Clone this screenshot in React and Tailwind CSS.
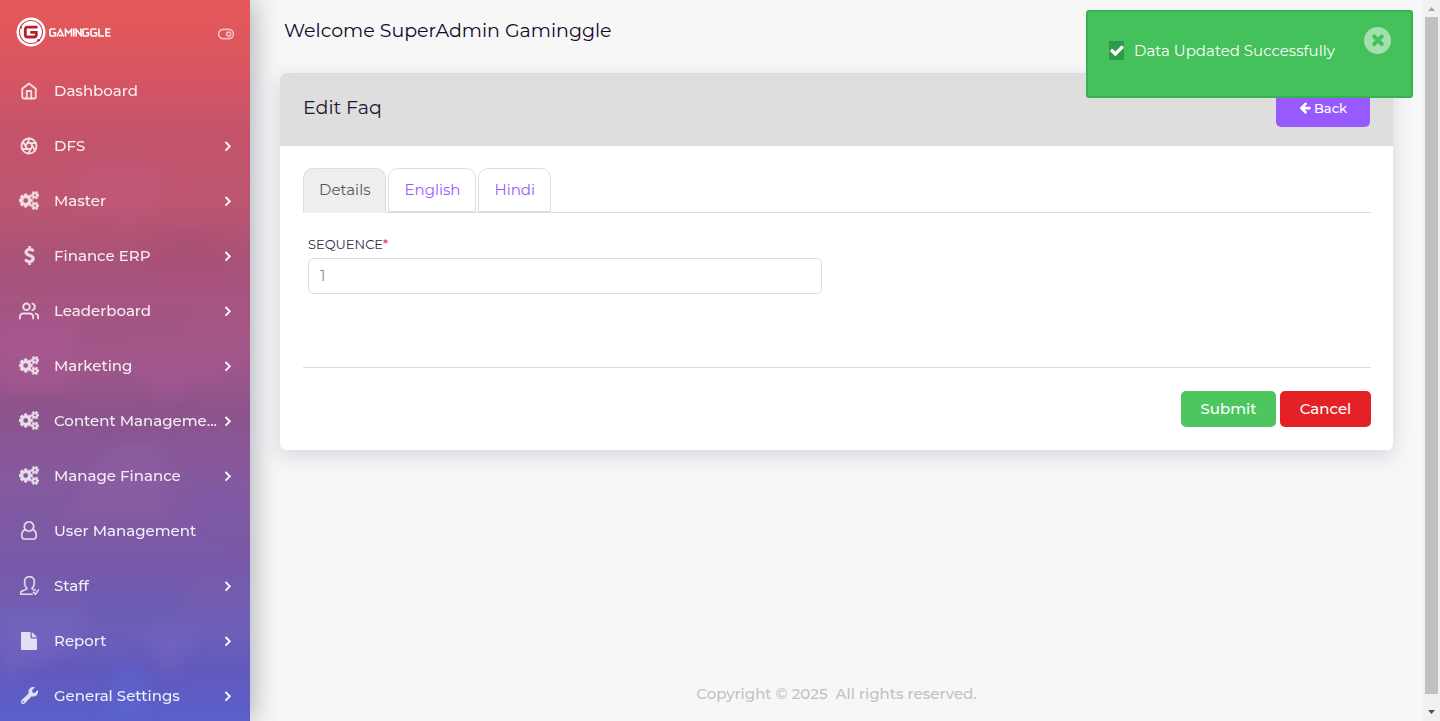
import { FiHome, FiAperture, FiUsers, FiToggleRight } from "react-icons/fi";
import { FaWrench } from "react-icons/fa";
import { SlUserFollowing } from "react-icons/sl";

function Glyph({ viewBox, d, className }) {
  return (
    <svg viewBox={viewBox} fill="currentColor" className={className} aria-hidden="true">
      <path d={d} />
    </svg>
  );
}

const smallGear =
  "v140q0 16-149 31-12 27-30 52 51 113 51 138 0 4-4 7-122 71-124 71-8 0-46-47t-52-68q-20 2-30 2t-30-2q-14 21-52 68t-46 47q-2 0-124-71-4-3-4-7 0-25 51-138-18-25-30-52-149-15-149-31v-140q0-16 149-31 13-29 30-52-51-113-51-138 0-4 4-7 4-2 35-20t59-34 30-16q8 0 46 46.5t52 67.5q20-2 30-2t30 2q51-71 92-112l6-2q4 0 124 70 4 3 4 7 0 25-51 138 17 23 30 52 149 15 149 31z";

const gears =
  "M896 896q0-106-75-181t-181-75-181 75-75 181 75 181 181 75 181-75 75-181zm768 512q0-52-38-90t-90-38-90 38-38 90q0 53 37.5 90.5t90.5 37.5 90.5-37.5 37.5-90.5zm0-1024q0-52-38-90t-90-38-90 38-38 90q0 53 37.5 90.5t90.5 37.5 90.5-37.5 37.5-90.5zm-384 421v185q0 10-7 19.5t-16 10.5l-155 24q-11 35-32 76 34 48 90 115 7 11 7 20 0 12-7 19-23 30-82.5 89.5t-78.5 59.5q-11 0-21-7l-115-90q-37 19-77 31-11 108-23 155-7 24-30 24h-186q-11 0-20-7.5t-10-17.5l-23-153q-34-10-75-31l-118 89q-7 7-20 7-11 0-21-8-144-133-144-160 0-9 7-19 10-14 41-53t47-61q-23-44-35-82l-152-24q-10-1-17-9.5t-7-19.5v-185q0-10 7-19.5t16-10.5l155-24q11-35 32-76-34-48-90-115-7-11-7-20 0-12 7-20 22-30 82-89t79-59q11 0 21 7l115 90q34-18 77-32 11-108 23-154 7-24 30-24h186q11 0 20 7.5t10 17.5l23 153q34 10 75 31l118-89q8-7 20-7 11 0 21 8 144 133 144 160 0 8-7 19-12 16-42 54t-45 60q23 48 34 82l152 23q10 2 17 10.5t7 19.5z" +
  "M1920 1338" + smallGear + "M1920 314" + smallGear;

const Gears = ({ className }) => <Glyph viewBox="0 0 1920 1792" className={className} d={gears} />;

const Dollar = ({ className }) => (
  <Glyph
    viewBox="0 0 1024 1792"
    className={className}
    d="M978 1185q0 153-99.5 263.5t-258.5 136.5v175q0 14-9 23t-23 9h-135q-13 0-22.5-9.5t-9.5-22.5v-175q-66-9-127.5-31t-101.5-44.5-74-48-46.5-37.5-17.5-18q-17-21-2-41l103-135q7-10 23-12 15-2 24 9l2 2q113 99 243 125 37 8 74 8 81 0 142.5-43t61.5-122q0-28-15-53t-33.5-42-58.5-37.5-66-32-80-32.5q-39-16-61.5-25t-61.5-26.5-62.5-31-56.5-35.5-53.5-42.5-43.5-49-35.5-58-21-66.5-8.5-78q0-138 98-242t255-134v-180q0-13 9.5-22.5t22.5-9.5h135q14 0 23 9t9 23v176q57 6 110.5 23t87 33.5 63.5 37.5 39 29 15 14q17 18 5 38l-81 146q-8 15-23 16-14 3-27-7-3-3-14.5-12t-39-26.5-58.5-32-74.5-26-85.5-11.5q-95 0-155 43t-60 111q0 26 8.5 48t29.5 41.5 39.5 33 56 31 60.500 27 70 27.5q53 20 81 31.5t76 35 75.5 42.5 62 50 53 63.5 31.5 76.5 13 94z"
  />
);

const UserOutline = ({ className }) => (
  <Glyph
    viewBox="0 0 1536 1792"
    className={className}
    d="M1201 784q47 14 89.500 38t89 73 79.500 115.500 55 172 22 236.500q0 154-100 263.500t-241 109.500h-854q-141 0-241-109.500t-100-263.500q0-131 22-236.500t55-172 79.500-115.500 89-73 89.500-38q-79-125-79-272 0-104 40.500-198.500t109.500-163.500 163.500-109.500 198.500-40.500 198.500 40.500 163.500 109.500 109.500 163.500 40.500 198.500q0 147-79 272zm-433-656q-159 0-271.500 112.500t-112.500 271.500 112.500 271.500 271.500 112.500 271.500-112.500 112.500-271.500-112.500-271.500-271.500-112.500zm427 1536q88 0 150.500-71.500t62.500-173.500q0-239-78.500-377t-225.500-145q-145 127-336 127t-336-127q-147 7-225.500 145t-78.500 377q0 102 62.500 173.500t150.500 71.500h854z"
  />
);

const FileSolid = ({ className }) => (
  <Glyph
    viewBox="0 0 16 18"
    className={className}
    d="M0 1Q0 0 1 0H9.500V5.500Q9.500 6.500 10.500 6.500H16V17Q16 18 15 18H1Q0 18 0 17ZM10.800 0.200Q11.200 0.300 11.500 0.600L15.400 4.500Q15.700 4.800 15.800 5.200H10.800Z"
  />
);

const ArrowLeft = ({ className }) => (
  <Glyph
    viewBox="0 128 1536 1792"
    className={className}
    d="M1536 896v128q0 53-32.5 90.5t-84.5 37.5h-704l293 294q38 36 38 90t-38 90l-75 76q-37 37-90 37-52 0-91-37l-651-652q-37-37-37-90 0-52 37-91l651-650q38-38 91-38 52 0 90 38l75 74q38 38 38 91t-38 91l-293 293h704q52 0 84.5 37.5t32.5 90.5z"
  />
);

const Check = ({ className }) => (
  <Glyph
    viewBox="100 200 1600 1500"
    className={className}
    d="M1671 566q0 40-28 68l-724 724-136 136q-28 28-68 28t-68-28l-136-136-362-362q-28-28-28-68t28-68l136-136q28-28 68-28t68 28l294 295 656-657q28-28 68-28t68 28l136 136q28 28 28 68z"
  />
);

const Cross = ({ className }) => (
  <Glyph
    viewBox="300 332 1192 1392"
    className={className}
    d="M1490 1322q0 40-28 68l-136 136q-28 28-68 28t-68-28l-294-294-294 294q-28 28-68 28t-68-28l-136-136q-28-28-28-68t28-68l294-294-294-294q-28-28-28-68t28-68l136-136q28-28 68-28t68 28l294 294 294-294q28-28 68-28t68 28l136 136q28 28 28 68t-28 68l-294 294 294 294q28 28 28 68z"
  />
);

function Chevron() {
  return (
    <svg viewBox="0 0 8 12" className="mb-px h-3 w-2 shrink-0" fill="none" stroke="currentColor" strokeWidth="1.800" aria-hidden="true">
      <path d="M1.500 2 5.800 6.300 1.500 10.600" />
    </svg>
  );
}

const items = [
  { label: "Dashboard", Icon: FiHome, size: "size-[18px] stroke-[2.5]", leaf: true },
  { label: "DFS", Icon: FiAperture, size: "size-[18px] stroke-[2.5]" },
  { label: "Master", Icon: Gears, size: "h-[19px] w-5 stroke-current stroke-[70]" },
  { label: "Finance ERP", Icon: Dollar, size: "h-[19px] w-[11px] stroke-current stroke-[60]" },
  { label: "Leaderboard", Icon: FiUsers, size: "size-5 stroke-[2.3]" },
  { label: "Marketing", Icon: Gears, size: "h-[19px] w-5 stroke-current stroke-[70]" },
  { label: "Content Manageme...", Icon: Gears, size: "h-[19px] w-5 stroke-current stroke-[70]" },
  { label: "Manage Finance", Icon: Gears, size: "h-[19px] w-5 stroke-current stroke-[70]" },
  { label: "User Management", Icon: UserOutline, size: "h-[19px] w-4 stroke-current stroke-[40]", leaf: true },
  { label: "Staff", Icon: SlUserFollowing, size: "size-[19px] stroke-current stroke-[26]" },
  { label: "Report", Icon: FileSolid, size: "h-[18px] w-4" },
  { label: "General Settings", Icon: FaWrench, size: "size-[17px]" },
];

function Logo() {
  return (
    <a href="#home" className="flex items-center gap-[3px] text-white" aria-label="Gaminggle">
      <svg viewBox="0 0 30 30" className="size-[30px]" aria-hidden="true">
        <circle cx="15" cy="15" r="14.500" fill="#fff" />
        <circle cx="15" cy="15" r="11.500" fill="none" stroke="#cf4a55" strokeWidth="1.200" />
        <circle cx="22.500" cy="23.200" r="1.300" fill="#b3202c" />
        <circle cx="5" cy="10.500" r="1.100" fill="#b3202c" />
        <path d="M21.500 10.200H11.500Q9.300 10.200 9.300 12.400V17.800Q9.300 20 11.500 20H18.300Q20.300 20 20.300 18V15.300H14.300" fill="none" stroke="#b3202c" strokeWidth="2.800" />
      </svg>
      <svg viewBox="0 0 62 9" className="h-[9px] w-[62px]" fill="none" stroke="#fff" strokeWidth="1.600" aria-hidden="true">
        <path d="M6.500 1H2Q1 1 1 2V7Q1 8 2 8H5.500Q6.500 8 6.500 7V4.800H4" />
        <path d="M8 8.500 11.300 1.500 14.600 8.500M10 7.500H13" />
        <path d="M16.500 8.500V1.500L19.500 5 22.500 1.500V8.500M24.800.5V8.500M27.200 8.500V1.500L32 7.500V.5" />
        <path d="M39.500 1H35Q34 1 34 2V7Q34 8 35 8H38.500Q39.500 8 39.500 7V4.800H37" />
        <path d="M47.500 1H43Q42 1 42 2V7Q42 8 43 8H46.500Q47.500 8 47.500 7V4.800H45" />
        <path d="M50 .5V8H55M61.500 1H57V8H61.500M57 4.500H61" />
      </svg>
    </a>
  );
}

function Sidebar() {
  return (
    <aside className="relative z-10 flex w-[250px] shrink-0 flex-col overflow-hidden bg-[linear-gradient(180deg,#e65857_0%,#d65562_11%,#c4536a_18%,#bd5670_28%,#a9527a_36%,#a4588a_49%,#8d538c_57%,#855a9f_67%,#7859a8_78%,#6e60b8_87%,#6159bd_93%,#5a60ca_100%)] text-white">
      <svg viewBox="0 0 250 721" preserveAspectRatio="none" className="absolute inset-0 -z-10 size-full" aria-hidden="true">
        <filter id="soft"><feGaussianBlur stdDeviation="7" /></filter>
        <g filter="url(#soft)">
          <path d="M80 160H165V205L130 225 70 205Z" fill="#c05a80" opacity=".4" />
          <path d="M160 230H220V275H150Z" fill="#a84e74" opacity=".5" />
          <path d="M80 320H180V345L160 330 80 350Z" fill="#9a5488" opacity=".5" />
          <path d="M0 320H75V390H0ZM125 365H245L160 400Z" fill="#a85a96" opacity=".4" />
          <path d="M110 445H165V520H65Z" fill="#9060a6" opacity=".5" />
          <path d="M190 485H240V540L200 515Z" fill="#7a58a8" opacity=".4" />
          <path d="M85 585H180V625H90Z" fill="#6a5ab4" opacity=".5" />
          <path d="M0 610H80V650L0 680ZM140 630H200L170 680Z" fill="#7566c2" opacity=".5" />
          <path d="M115 670H145V721H100Z" fill="#5a66d4" opacity=".5" />
        </g>
      </svg>
      <div className="flex h-16 shrink-0 items-center justify-between px-4">
        <Logo />
        <button type="button" aria-label="Toggle sidebar" className="mt-1 opacity-60">
          <FiToggleRight className="size-4 stroke-[2.5]" />
        </button>
      </div>
      <nav>
        {items.map(({ label, Icon, size, leaf }) => (
          <a key={label} href="#menu" className="flex h-[55px] items-center pr-[18px] pl-[19px] text-[15px] font-medium">
            <span className="mb-0.5 flex w-5 shrink-0 justify-center opacity-80">
              <Icon className={size} />
            </span>
            <span className="ml-[15px] grow whitespace-nowrap opacity-90">{label}</span>
            {!leaf && <Chevron />}
          </a>
        ))}
      </nav>
    </aside>
  );
}

const tabs = ["Details", "English", "Hindi"];

function EditCard() {
  return (
    <section className="overflow-hidden rounded-md bg-white">
      <header className="flex h-[73px] items-center justify-between bg-[#dedede] px-[23px] pb-0.5">
        <h1 className="text-[19px] text-[#1e1636]">Edit Faq</h1>
        <a href="#back" className="flex h-9 w-[94px] items-center justify-center gap-[3px] rounded-[5px] bg-[#975aff] text-[13px] font-medium text-white">
          <ArrowLeft className="h-[13px] w-3" />
          Back
        </a>
      </header>
      <form className="pt-[22px] pr-[22px] pb-[23px] pl-[23px]">
        <div role="tablist" className="flex gap-0.5 border-b border-[#dddddd]">
          {tabs.map((tab, i) => (
            <button
              key={tab}
              type="button"
              role="tab"
              aria-selected={i === 0}
              className={
                i === 0
                  ? "-mb-px h-[45px] rounded-t-[10px] border border-b-0 border-[#dddddd] bg-[#eeeeee] px-[15px] pb-px text-[15px] text-[#55595c]"
                  : "h-11 rounded-t-[10px] border border-[#dddddd] px-[15px] text-[15px] text-[#975aff]"
              }
            >
              {tab}
            </button>
          ))}
        </div>
        <div className="flex w-1/2 flex-col pt-[23px] pr-[15px] pl-[5px]">
          <label htmlFor="sequence" className="text-[13px] leading-4 text-[#342e49] uppercase">
            Sequence<span className="text-red-600">*</span>
          </label>
          <input
            id="sequence"
            type="text"
            defaultValue="1"
            className="mt-1.5 h-9 rounded-[5px] border border-[#dddddd] px-[11px] pb-0.5 text-[15px] text-[#8a8a90] outline-none"
          />
        </div>
        <div className="mt-[73px] flex justify-end gap-1 border-t border-[#dddddd] pt-[23px]">
          <button type="submit" className="h-9 w-[95px] rounded-[5px] bg-[#4dc660] text-[15px] font-medium text-white">Submit</button>
          <button type="button" className="h-9 w-[91px] rounded-[5px] bg-[#e42226] text-[15px] font-medium text-white">Cancel</button>
        </div>
      </form>
    </section>
  );
}

function Toast() {
  return (
    <div role="status" className="absolute top-[10px] right-[27px] z-20 flex h-[88px] w-[327px] items-start rounded-[3px] border-2 border-[#36b350] bg-[#44c15a] pt-[15px] pr-5 pl-[21px] text-white">
      <span className="mt-3.5 flex h-[19px] w-[15px] items-center justify-center bg-[#2a9c4c]">
        <Check className="size-[14px]" />
      </span>
      <span className="mt-3 ml-2.5 grow text-[15px] leading-6">Data Updated Successfully</span>
      <button type="button" aria-label="Close" className="flex size-[27px] items-center justify-center rounded-full bg-white/50 text-[#44c15a]">
        <Cross className="size-[14px]" />
      </button>
    </div>
  );
}

function ScrollRail() {
  return (
    <div className="flex w-[17px] shrink-0 flex-col items-center justify-between bg-[#f1f1f1]" aria-hidden="true">
      <svg viewBox="0 0 17 17" className="size-[17px]"><path d="M5 11 8.500 7 12 11Z" fill="#a3a3a3" /></svg>
      <div className="mb-2.5 w-[13px] grow bg-[#c1c1c1]" />
      <svg viewBox="0 0 17 17" className="size-[17px]"><path d="M5 6 8.500 10 12 6Z" fill="#505050" /></svg>
    </div>
  );
}

export default function App() {
  return (
    <div className="relative flex h-screen overflow-hidden bg-[#f7f7f7] font-['Montserrat','Inter',sans-serif]">
      <div className="z-10 flex shadow-[2px_0_26px_rgba(40,55,75,0.4)]">
        <Sidebar />
      </div>
      <div className="flex min-w-0 grow flex-col px-[30px]">
        <p className="flex h-[73px] shrink-0 items-start pt-[17px] pl-1 text-[19px] leading-7 text-[#12082a]">Welcome SuperAdmin Gaminggle</p>
        <main className="rounded-md shadow-[0_6px_20px_rgba(62,72,110,0.18)]">
          <EditCard />
        </main>
        <footer className="mt-auto pb-[15px] text-center text-[15px] leading-6 font-medium whitespace-pre text-[#c2c2c2]">
          Copyright © 2025{"  "}All rights reserved.
        </footer>
      </div>
      <ScrollRail />
      <Toast />
    </div>
  );
}
